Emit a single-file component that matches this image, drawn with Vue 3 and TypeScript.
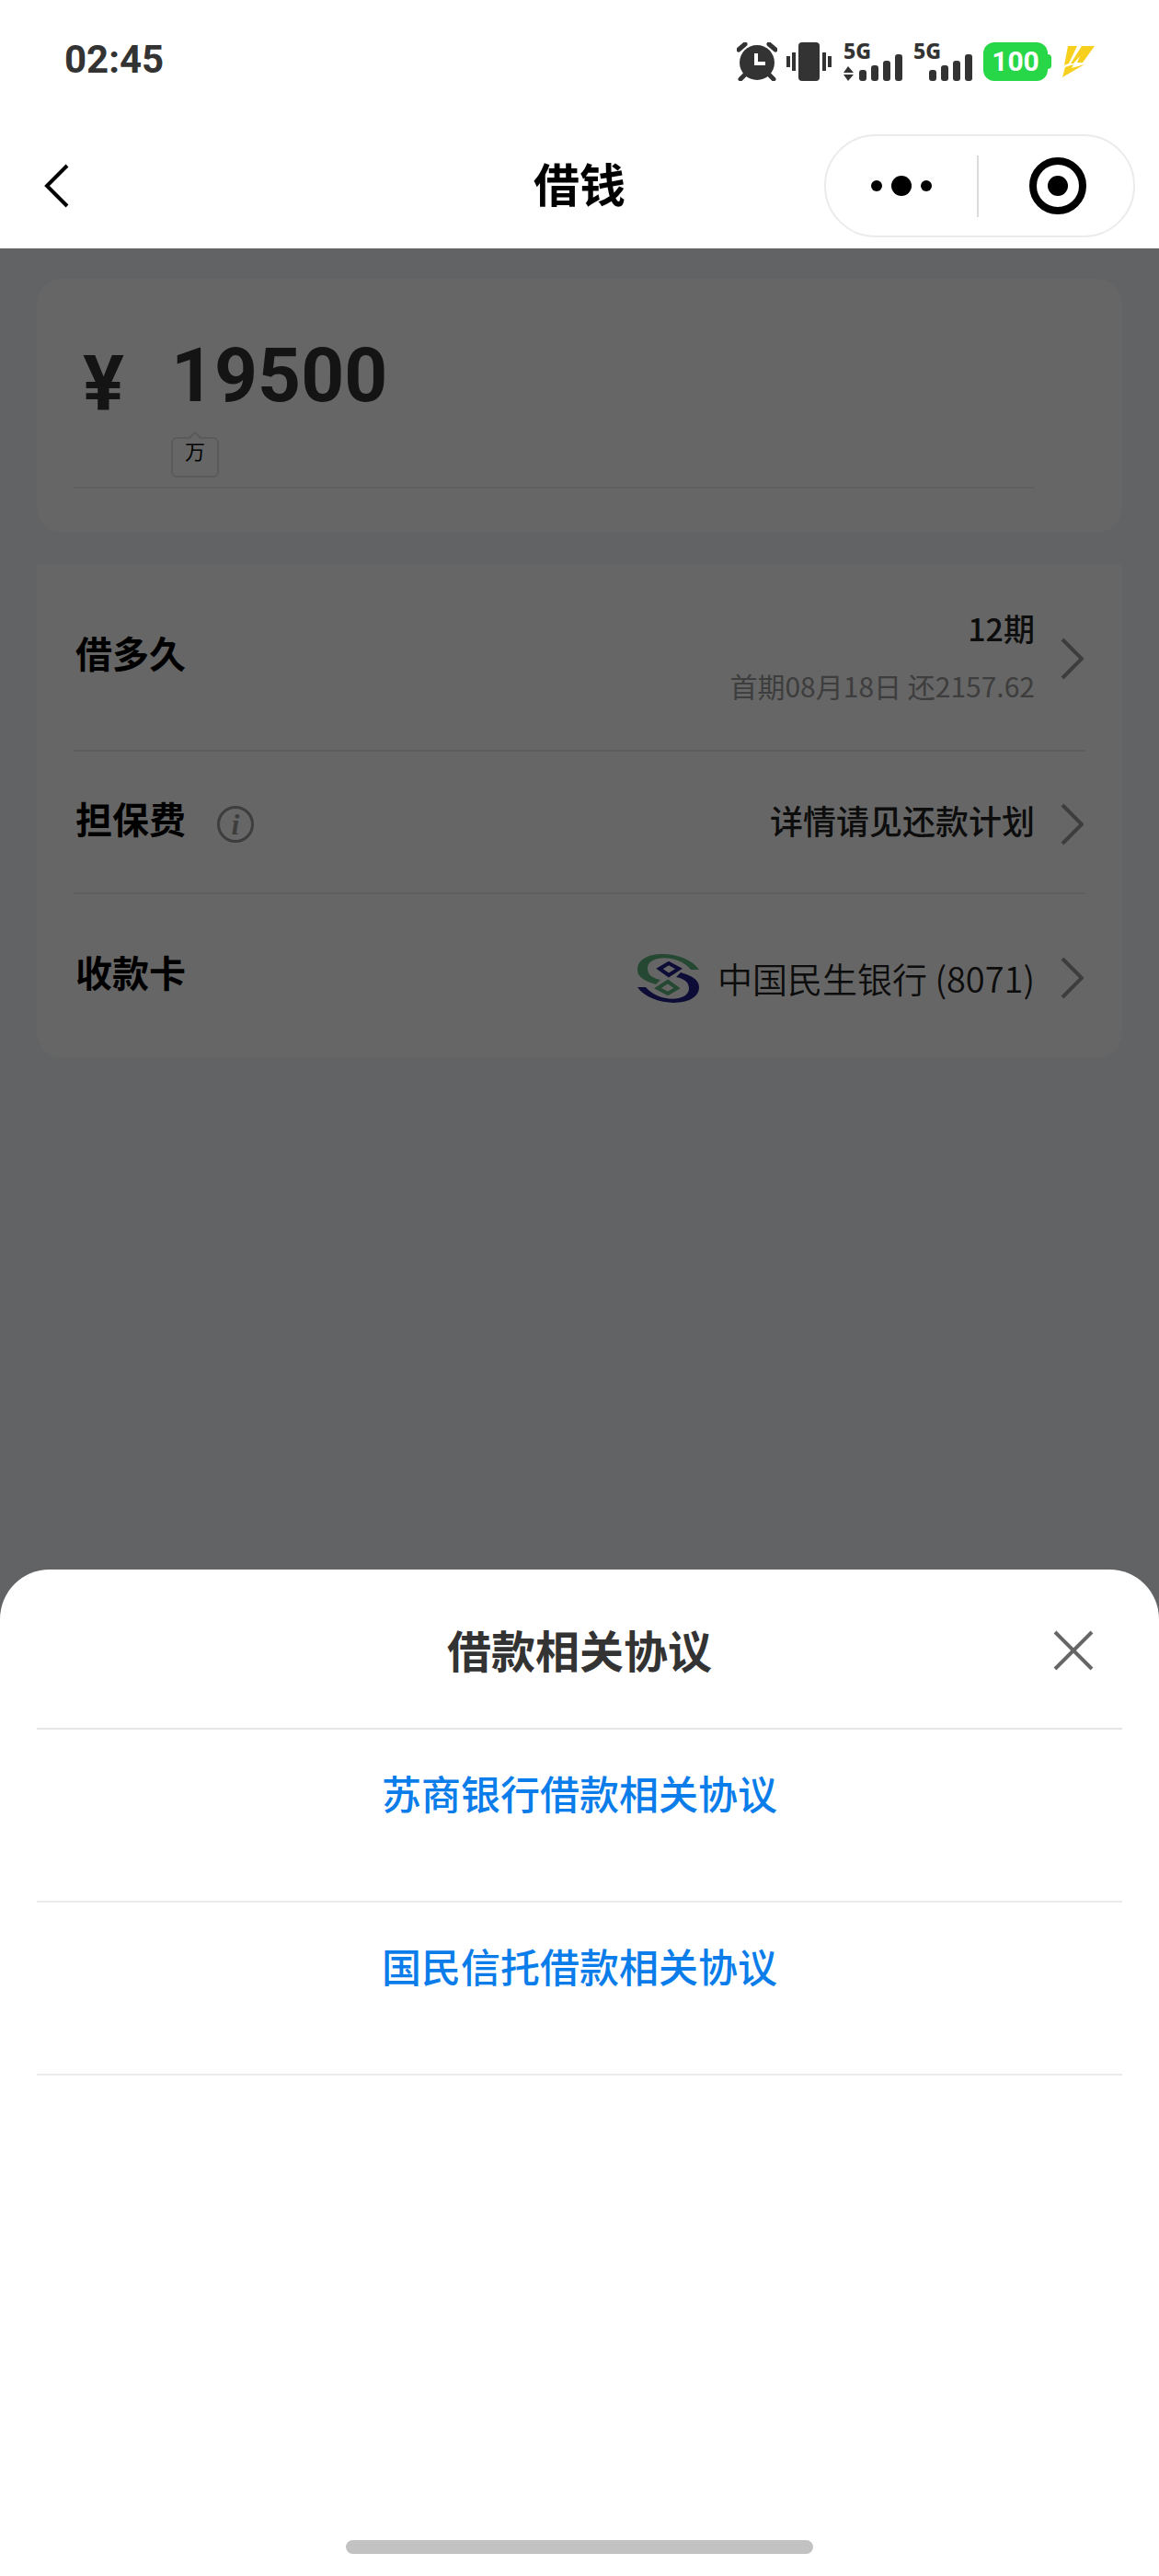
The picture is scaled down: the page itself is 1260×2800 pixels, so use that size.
<script setup lang="ts">
import { ref } from 'vue'

interface Agreement {
  id: string
  title: string
}

const amount = ref('19500')
const sheetOpen = ref(true)
const barHeights: number[] = [12, 17, 22, 29]
const networks = [
  { id: 'sim1', active: true },
  { id: 'sim2', active: false },
]
const agreements: Agreement[] = [
  { id: 'sushang', title: '苏商银行借款相关协议' },
  { id: 'guomin', title: '国民信托借款相关协议' },
]
</script>

<template>
  <div class="page">
    <header class="top">
      <div class="status">
        <span class="time">02:45</span>
        <div class="status-icons">
          <svg class="alarm" width="44" height="42" viewBox="0 0 44 42">
            <circle cx="22" cy="22" r="19" fill="#333" />
            <path d="M2 8 9 2M42 8 35 2M4 40 10 34M40 40 34 34" stroke="#333" stroke-width="5" stroke-linecap="round" />
            <path d="M21 12V23H31" fill="none" stroke="#fff" stroke-width="4" />
          </svg>
          <svg class="vibrate" width="50" height="42" viewBox="0 0 50 42">
            <rect x="13" y="0" width="23" height="42" rx="4" fill="#333" />
            <path d="M2 15V27M8 11V31M41 11V31M47 15V27" stroke="#333" stroke-width="4" />
          </svg>
          <div v-for="net in networks" :key="net.id" class="signal">
            <span class="net">5G</span>
            <svg width="64" height="42" viewBox="0 0 64 42">
              <path v-if="net.active" d="M0 33H11L5 26ZM0 35H11L5 42Z" fill="#333" />
              <rect
                v-for="(h, i) in barHeights"
                :key="i"
                :x="17 + i * 13"
                :y="42 - h"
                width="8"
                :height="h"
                rx="3"
                fill="#333"
              />
            </svg>
          </div>
          <div class="battery"><span>100</span></div>
          <svg class="bolt" width="35" height="34" viewBox="0 0 35 34">
            <path d="M6 0H16L7 19 2 21ZM21 0H35L22 18H16L19 11 12 19H9ZM3 23 12 20 10 24 24 20 0 34Z" fill="#f7d01e" />
          </svg>
        </div>
      </div>
      <nav class="nav">
        <button class="back" type="button" aria-label="返回">
          <svg width="28" height="48" viewBox="0 0 28 48">
            <path d="M25 2 3 24 25 46" fill="none" stroke="#000" stroke-width="4" />
          </svg>
        </button>
        <h1 class="title">借钱</h1>
        <div class="capsule">
          <button type="button" aria-label="更多">
            <svg width="66" height="24" viewBox="0 0 66 24">
              <circle cx="6" cy="12" r="6" />
              <circle cx="33" cy="12" r="11" />
              <circle cx="60" cy="12" r="6" />
            </svg>
          </button>
          <span class="capsule-line"></span>
          <button class="exit" type="button" aria-label="关闭小程序">
            <svg width="62" height="62" viewBox="0 0 62 62">
              <circle cx="31" cy="31" r="27" fill="none" stroke="#000" stroke-width="8" />
              <circle cx="31" cy="31" r="11" />
            </svg>
          </button>
        </div>
      </nav>
    </header>

    <div class="body">
      <main class="content">
        <section class="card amount-card">
          <div class="amount">
            <label class="yen" for="amount">¥</label>
            <input id="amount" v-model="amount" class="amount-input" inputmode="numeric" />
          </div>
          <div class="unit">
            <svg width="14" height="8" viewBox="0 0 14 8">
              <path d="M0 8 7 1 14 8" fill="#fff" stroke="#dedede" stroke-width="2" />
            </svg>
            <span>万</span>
          </div>
        </section>

        <section class="card rows">
          <div class="row row-term">
            <span class="label">借多久</span>
            <div class="value-stack">
              <span class="term">12期</span>
              <span class="first-pay">首期08月18日 还2157.62</span>
            </div>
            <svg class="chevron" width="25" height="46" viewBox="0 0 25 46">
              <path d="M2 2 23 23 2 44" />
            </svg>
          </div>
          <div class="row row-fee">
            <span class="label">担保费</span>
            <button class="info" type="button" aria-label="担保费说明">i</button>
            <span class="value">详情请见还款计划</span>
            <svg class="chevron" width="25" height="46" viewBox="0 0 25 46">
              <path d="M2 2 23 23 2 44" />
            </svg>
          </div>
          <div class="row row-card">
            <span class="label">收款卡</span>
            <div class="bank">
              <svg width="67" height="53" viewBox="0 0 67 53">
                <g fill="#5cb47e" stroke="#5cb47e">
                  <path d="M67 17C52-5 0-6 0 17 0 26 10 30 20 33L25 28C15 26 11 22 11 15 12 1 44 0 58 17Z" stroke="none" />
                  <path d="M33 30 43 37 33 43 22 37Z" fill="none" stroke-width="4" />
                </g>
                <g fill="#1f1f88" stroke="#1f1f88">
                  <path d="M0 36C15 58 67 59 67 36 67 27 57 23 47 20L42 25C52 27 56 31 56 38 55 52 23 53 9 36Z" stroke="none" />
                  <path d="M34 23 24 16 34 10 45 16Z" fill="none" stroke-width="4" />
                </g>
              </svg>
              <span>中国民生银行 (8071)</span>
            </div>
            <svg class="chevron" width="25" height="46" viewBox="0 0 25 46">
              <path d="M2 2 23 23 2 44" />
            </svg>
          </div>
        </section>
      </main>

      <div v-if="sheetOpen" class="mask" @click="sheetOpen = false"></div>
      <section v-if="sheetOpen" class="sheet" role="dialog" aria-labelledby="sheet-title">
        <header class="sheet-head">
          <h2 id="sheet-title">借款相关协议</h2>
          <button class="close" type="button" aria-label="关闭" @click="sheetOpen = false">
            <svg width="46" height="46" viewBox="0 0 46 46">
              <path d="M3 3 43 43M43 3 3 43" stroke="#666" stroke-width="4" />
            </svg>
          </button>
        </header>
        <ul class="agreements">
          <li v-for="item in agreements" :key="item.id">
            <a :href="'#' + item.id">{{ item.title }}</a>
          </li>
        </ul>
        <div class="home-bar"></div>
      </section>
    </div>
  </div>
</template>

<style>
body {
  margin: 0;
  background: #fff;
}
</style>

<style scoped>
.page {
  display: flex;
  flex-direction: column;
  min-height: 100vh;
  font-family: "Noto Sans CJK SC", "Noto Sans", sans-serif;
  color: #000;
}

button {
  display: flex;
  align-items: center;
  justify-content: center;
  padding: 0;
  border: 0;
  background: none;
  cursor: pointer;
}

svg {
  display: block;
}

.status {
  display: flex;
  align-items: center;
  justify-content: space-between;
  height: 134px;
  padding: 0 70px;
  color: #333;
}

.time {
  padding-bottom: 4px;
  font: 700 42px/60px Roboto, sans-serif;
}

.status-icons {
  display: flex;
  align-items: center;
  gap: 12px;
}

.alarm {
  margin-right: -2px;
}

.signal {
  position: relative;
}

.net {
  position: absolute;
  top: 0;
  left: 0;
  font: 800 23px/18px "Noto Sans", sans-serif;
}

.battery {
  position: relative;
  display: flex;
  align-items: center;
  justify-content: center;
  width: 70px;
  height: 42px;
  margin-right: 4px;
  border-radius: 12px;
  background: #28d748;
  color: #fff;
  font: 700 30px/42px Roboto, sans-serif;
}

.battery::after {
  content: "";
  position: absolute;
  left: 68px;
  top: 13px;
  width: 6px;
  height: 16px;
  border-radius: 0 4px 4px 0;
  background: #28d748;
}

.nav {
  display: grid;
  grid-template-columns: 1fr auto 1fr;
  align-items: center;
  height: 136px;
  padding: 0 26px;
}

.back {
  justify-self: start;
  padding-left: 22px;
}

.title {
  margin: 0;
  padding-bottom: 8px;
  font-size: 50px;
  line-height: 60px;
  font-weight: 700;
}

.capsule {
  display: flex;
  align-items: center;
  justify-self: end;
  box-sizing: border-box;
  width: 338px;
  height: 112px;
  border: 2px solid #ebebeb;
  border-radius: 56px;
}

.capsule button {
  flex: 1;
  box-sizing: border-box;
  height: 100%;
}

.capsule .exit {
  padding-left: 4px;
}

.capsule-line {
  width: 2px;
  height: 67px;
  background: #dcdcdc;
}

.body {
  position: relative;
  display: flex;
  flex: 1;
  flex-direction: column;
  background: #f5f7fa;
}

.content {
  display: flex;
  flex-direction: column;
  gap: 34px;
  padding: 33px 40px;
}

.card {
  padding: 0 40px;
  background: #fff;
}

.amount-card {
  padding: 60px 95px 48px 40px;
  border-radius: 28px;
}

.amount {
  display: flex;
  align-items: center;
  height: 88px;
}

.yen {
  width: 106px;
  padding: 22px 0 0 10px;
  box-sizing: border-box;
  font: 700 84px/80px Roboto, sans-serif;
  color: #333;
}

.amount-input {
  flex: 1;
  min-width: 0;
  height: 88px;
  padding: 2px 0 0;
  border: 0;
  outline: 0;
  background: none;
  color: #333;
  font: 700 82px/88px Roboto, sans-serif;
}

.unit {
  display: flex;
  flex-direction: column;
  align-items: center;
  width: 52px;
  margin: 18px 0 10px 106px;
}

.unit svg {
  position: relative;
  margin-bottom: -2px;
}

.unit span {
  box-sizing: border-box;
  width: 52px;
  height: 44px;
  border: 2px solid #e2e2e2;
  border-radius: 6px;
  font-size: 22px;
  line-height: 24px;
  text-align: center;
}

.amount-card::after {
  content: "";
  display: block;
  height: 2px;
  background: #f0f0f0;
}

.rows {
  border-radius: 0 0 28px 28px;
}

.row {
  display: flex;
  align-items: center;
  box-sizing: border-box;
  padding-top: 4px;
}

.row + .row {
  border-top: 2px solid #ebebeb;
}

.row-term {
  height: 202px;
}

.row-fee {
  height: 155px;
}

.row-card {
  height: 180px;
}

.label {
  padding: 0 0 14px 2px;
  font-size: 40px;
  line-height: 48px;
  font-weight: 700;
}

.value-stack,
.value,
.bank {
  margin-left: auto;
}

.value-stack {
  display: flex;
  flex-direction: column;
  align-items: flex-end;
  gap: 18px;
  padding-bottom: 4px;
}

.term {
  font-size: 34px;
  line-height: 44px;
  font-weight: 500;
  color: #222;
}

.first-pay {
  font-size: 30px;
  line-height: 44px;
  color: #999;
}

.value {
  padding-bottom: 10px;
  font-size: 36px;
  line-height: 44px;
  font-weight: 500;
  color: #222;
}

.bank {
  display: flex;
  align-items: center;
  gap: 20px;
  font-size: 38px;
  line-height: 48px;
  font-weight: 350;
  color: #222;
}

.chevron {
  margin: 0 2px 0 28px;
  fill: none;
  stroke: #999;
  stroke-width: 4;
}

.info {
  box-sizing: border-box;
  width: 40px;
  height: 40px;
  margin-left: 34px;
  border: 3px solid #999;
  border-radius: 50%;
  color: #999;
  font: italic 700 32px/34px "Liberation Serif", serif;
}

.mask {
  position: absolute;
  inset: 0;
  background: rgba(0, 0, 0, 0.6);
}

.sheet {
  position: relative;
  margin-top: auto;
  padding: 0 40px 24px;
  border-radius: 54px 54px 0 0;
  background: #fff;
}

.sheet-head {
  display: grid;
  grid-template-columns: 1fr auto 1fr;
  align-items: center;
  height: 172px;
  border-bottom: 2px solid #e5e5e5;
}

.sheet-head h2 {
  grid-column: 2;
  margin: 0;
  font-size: 48px;
  line-height: 60px;
  font-weight: 700;
  color: #333;
}

.close {
  justify-self: end;
  padding-top: 4px;
  margin-right: 30px;
}

.agreements {
  margin: 0;
  padding: 0 0 505px;
  list-style: none;
}

.agreements li {
  box-sizing: border-box;
  height: 188px;
  padding-top: 38px;
  border-bottom: 2px solid #ebebeb;
  text-align: center;
}

.agreements a {
  font-size: 43px;
  line-height: 60px;
  font-weight: 500;
  color: #0a7dea;
  text-decoration: none;
}

.home-bar {
  width: 43%;
  height: 15px;
  margin: 0 auto;
  border-radius: 8px;
  background: #c2c2c2;
}
</style>
